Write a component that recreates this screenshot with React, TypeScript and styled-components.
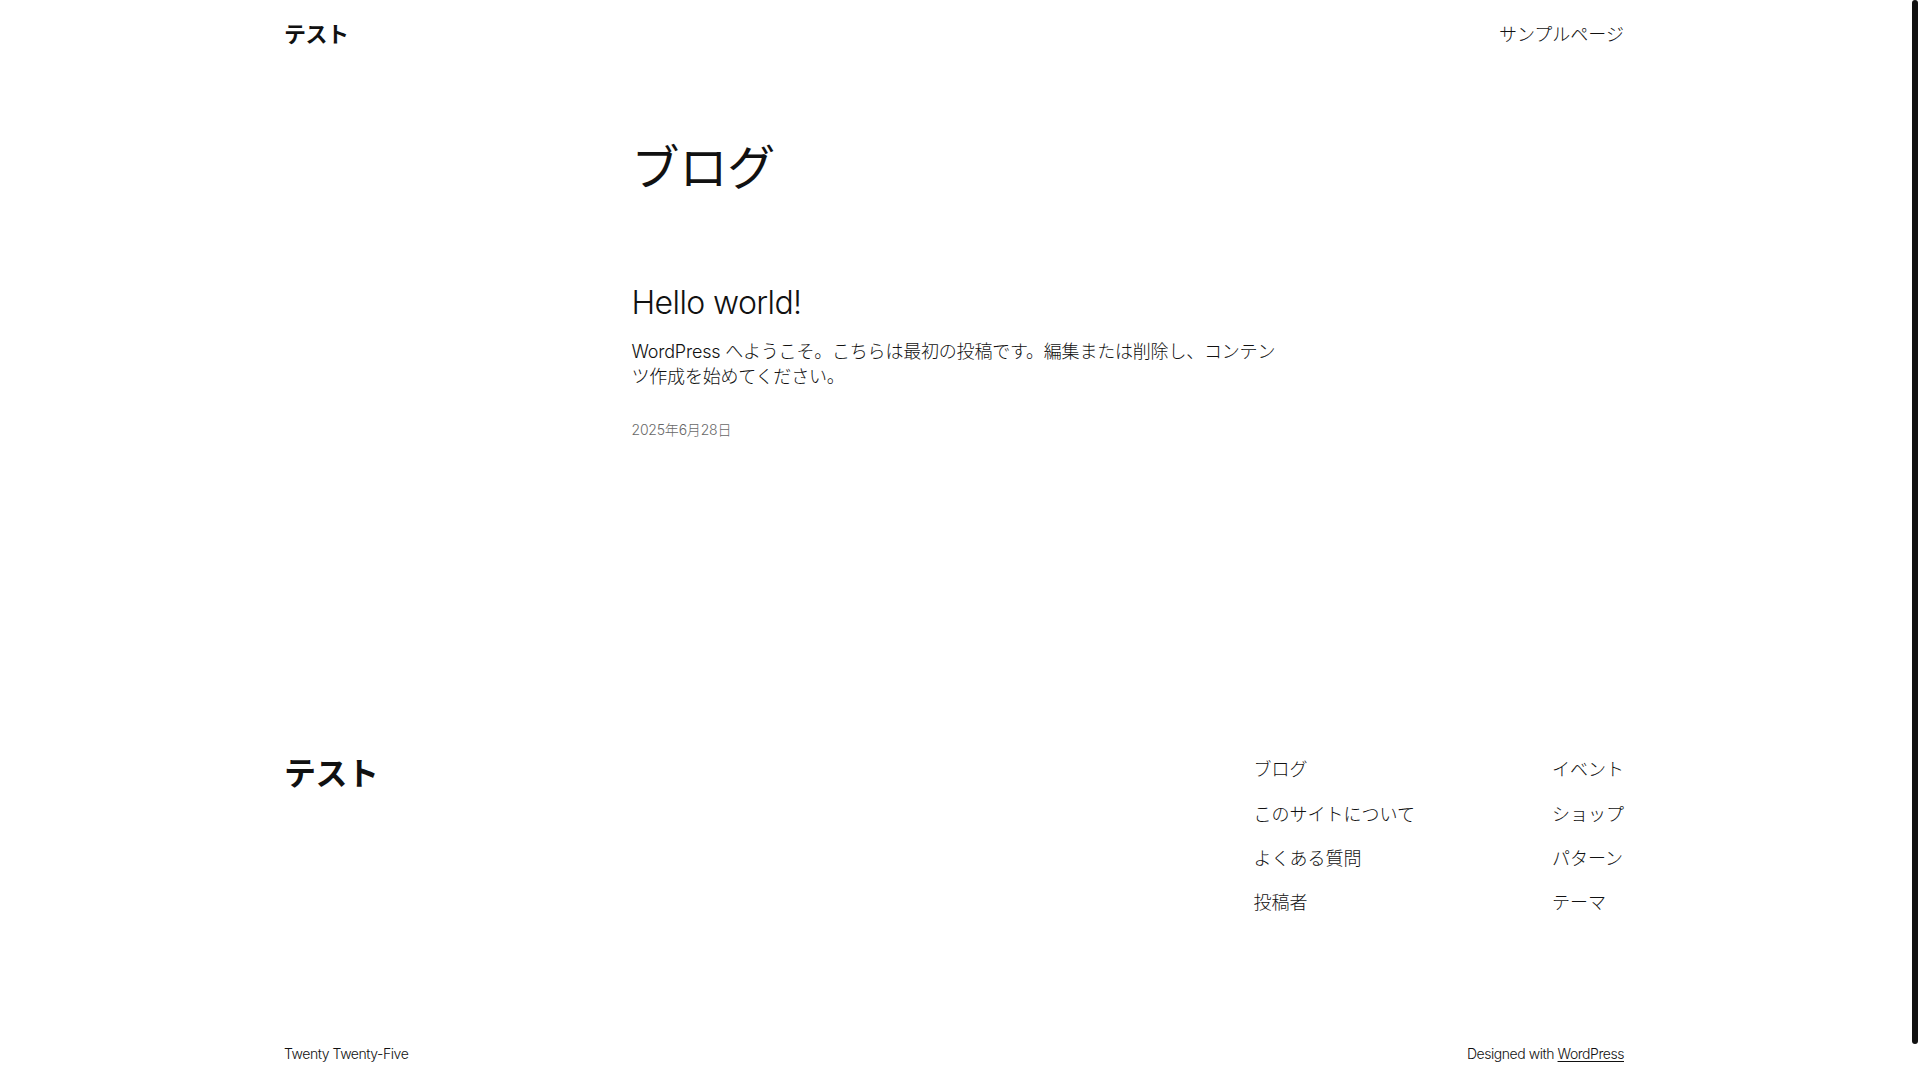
import React from 'react';
import styled, { createGlobalStyle } from 'styled-components';

const GlobalStyle = createGlobalStyle`
  body {
    margin: 0;
    background: #ffffff;
    color: #111111;
    font-family: 'Inter', 'Noto Sans CJK JP', sans-serif;
    font-weight: 300;
    font-size: 18px;
    line-height: 1.4;
  }
  a {
    color: inherit;
  }
`;

// leaves room for the window scrollbar gutter seen on the right edge
const Page = styled.div`
  display: flex;
  flex-direction: column;
  padding-right: 12px;
`;

const ScrollThumb = styled.div`
  position: fixed;
  top: 0;
  right: 2px;
  width: 6px;
  height: 1044px;
  background: #111111;
  border-radius: 3px;
`;

const Wide = styled.div`
  width: 100%;
  max-width: 1340px;
  margin: 0 auto;
`;

const Header = styled(Wide)`
  height: 68px;
  display: flex;
  align-items: center;
  justify-content: space-between;
`;

const SiteTitle = styled.a<{ $size: number; $shift: number }>`
  font-family: 'Noto Sans CJK JP', 'Inter', sans-serif;
  font-weight: 700;
  font-size: ${p => p.$size}px;
  line-height: 1.125;
  letter-spacing: -0.5px;
  text-decoration: none;
  margin-top: ${p => p.$shift}px;
`;

const NavLink = styled.a`
  font-size: 18px;
  line-height: 1.4;
  text-decoration: none;
`;

const HeaderLink = styled(NavLink)`
  margin-top: 2px;
`;

const Main = styled.main`
  width: 100%;
  max-width: 645px;
  margin: 0 auto;
  padding-top: 73px;
  display: flex;
  flex-direction: column;
`;

const PageTitle = styled.h1`
  margin: 0;
  font-size: 48px;
  font-weight: 400;
  line-height: 1.125;
  letter-spacing: -0.1px;
`;

const Post = styled.article`
  margin-top: 90px;
  display: flex;
  flex-direction: column;
`;

const PostTitle = styled.h2`
  margin: 0;
  font-size: 32px;
  font-weight: 300;
  line-height: 1.125;
  letter-spacing: -0.6px;
`;

const Excerpt = styled.p`
  margin: 18px 0 0;
  font-size: 18px;
  line-height: 1.4;
  letter-spacing: -0.2px;
`;

const PostDate = styled.time`
  margin-top: 30px;
  font-size: 14px;
  line-height: 1.5;
  letter-spacing: -0.2px;
  color: #686868;
`;

const Footer = styled(Wide)`
  padding-top: 317px;
  padding-bottom: 52px;
  display: flex;
  flex-direction: column;
`;

const FooterTop = styled.div`
  display: flex;
  justify-content: space-between;
  align-items: flex-start;
`;

const FooterNavs = styled.div`
  display: flex;
  gap: 137px;
`;

const NavColumn = styled.nav`
  display: flex;
  flex-direction: column;
  gap: 19px;
`;

const FooterBottom = styled.div`
  margin-top: 128px;
  display: flex;
  justify-content: space-between;
  align-items: center;
  font-size: 14px;
  line-height: 1.5;
  letter-spacing: -0.45px;
`;

const Credit = styled.a`
  text-decoration: underline;
  text-underline-offset: 2px;
`;

const navLeft = ['ブログ', 'このサイトについて', 'よくある質問', '投稿者'];
const navRight = ['イベント', 'ショップ', 'パターン', 'テーマ'];

export default function App() {
  return (
    <Page>
      <GlobalStyle />
      <ScrollThumb />
      <Header as="header">
        <SiteTitle href="#" $size={22} $shift={-4}>テスト</SiteTitle>
        <HeaderLink href="#">サンプルページ</HeaderLink>
      </Header>

      <Main>
        <PageTitle>ブログ</PageTitle>
        <Post>
          <PostTitle>Hello world!</PostTitle>
          <Excerpt>
            WordPress へようこそ。こちらは最初の投稿です。編集または削除し、コンテンツ作成を始めてください。
          </Excerpt>
          <PostDate>2025年6月28日</PostDate>
        </Post>
      </Main>

      <Footer as="footer">
        <FooterTop>
          <SiteTitle href="#" $size={32} $shift={-4}>テスト</SiteTitle>
          <FooterNavs>
            <NavColumn>
              {navLeft.map(item => (
                <NavLink key={item} href="#">{item}</NavLink>
              ))}
            </NavColumn>
            <NavColumn>
              {navRight.map(item => (
                <NavLink key={item} href="#">{item}</NavLink>
              ))}
            </NavColumn>
          </FooterNavs>
        </FooterTop>
        <FooterBottom>
          <span>Twenty Twenty-Five</span>
          <span>
            Designed with <Credit href="#">WordPress</Credit>
          </span>
        </FooterBottom>
      </Footer>
    </Page>
  );
}
